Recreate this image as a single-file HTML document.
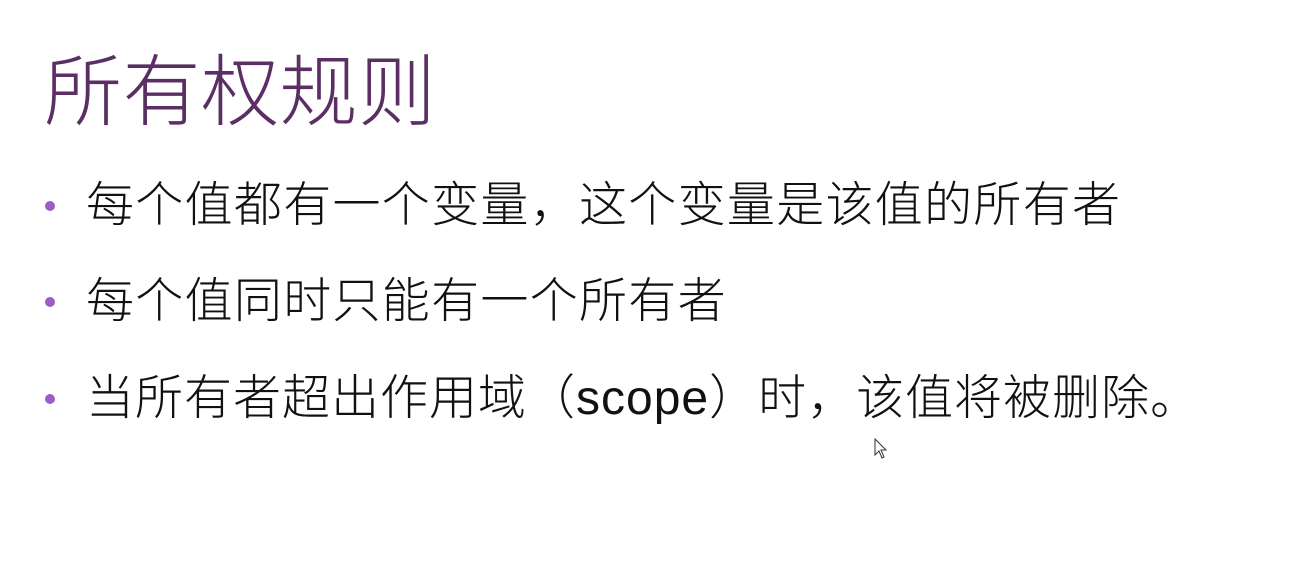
<!DOCTYPE html>
<html><head><meta charset="utf-8"><style>
html,body{margin:0;padding:0;width:1308px;height:568px;background:#fff;overflow:hidden}
body{position:relative;font-family:"Liberation Sans","Noto Sans CJK SC",sans-serif}
.t{position:absolute;left:44px;top:36px;font-size:78px;line-height:100px;color:#5b2f63;font-weight:300;white-space:nowrap;font-family:"Noto Sans CJK SC",sans-serif;letter-spacing:0.5px}
.l{position:absolute;left:86px;font-size:48px;line-height:60px;color:#111;white-space:nowrap;font-family:"Liberation Sans","Noto Sans CJK SC",sans-serif;font-weight:300;letter-spacing:1.3px}
.d{position:absolute;left:45px;width:10px;height:10px;border-radius:50%;background:#9d5cc8}
</style></head><body>
<div class="t">所有权规则</div>
<div class="d" style="top:201px"></div>
<div class="l" style="top:176px">每个值都有一个变量，这个变量是该值的所有者</div>
<div class="d" style="top:297px"></div>
<div class="l" style="top:272px">每个值同时只能有一个所有者</div>
<div class="d" style="top:394px"></div>
<div class="l" style="top:369px;letter-spacing:1px">当所有者超出作用域（scope）时，该值将被删除。</div>
<svg style="position:absolute;left:874px;top:438px" width="14" height="22" viewBox="0 0 14 22"><path d="M1 1 L1 17 L5 13 L8 20 L10 19 L7 12 L12 12 Z" fill="#fff" stroke="#333" stroke-width="1"/></svg>
</body></html>
